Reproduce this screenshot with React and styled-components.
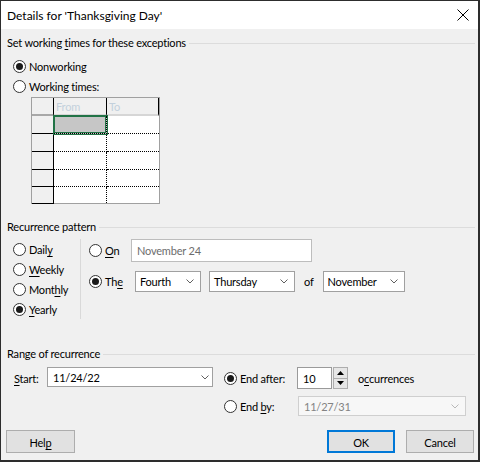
import React from 'react'
import styled, { createGlobalStyle } from 'styled-components'

const GlobalStyle = createGlobalStyle`
  html, body { margin: 0; padding: 0; background: #fff; }
  body {
    font-family: "Segoe UI", Lato, "Noto Sans", sans-serif;
    font-size: 11px;
    letter-spacing: -0.2px;
    color: #000;
  }
`

const Window = styled.div`
  width: 480px;
  height: 462px;
  box-sizing: border-box;
  border: 1px solid #2d2d2d;
  border-right-width: 2px;
  border-bottom-width: 2px;
  background: #f0f0f0;
  display: flex;
  flex-direction: column;
`

const TitleBar = styled.div`
  height: 28px;
  flex: none;
  background: #fff;
  display: flex;
  align-items: center;
  justify-content: space-between;
  padding: 0 9px 0 6px;
`

const Title = styled.div`
  font-size: 12px;
  letter-spacing: 0;
  line-height: 16px;
  padding-top: 1px;
`

const Body = styled.div`
  flex: 1;
  display: flex;
  flex-direction: column;
  padding: 0 3px 0 6px;
`

const GroupHead = styled.div`
  display: flex;
  align-items: center;
  gap: 3px;
  height: 16px;
  line-height: 16px;
  margin-top: ${p => p.$mt}px;
  &::after {
    content: "";
    flex: 1;
    border-top: 1px solid #dcdcdc;
  }
`

const Key = styled.u`
  text-decoration: underline;
  text-underline-offset: 2px;
  text-decoration-thickness: 1px;
`

const Option = styled.div`
  display: flex;
  align-items: center;
  gap: 3px;
  height: ${p => p.$h || 20}px;
  width: ${p => (p.$w ? p.$w + 'px' : 'auto')};
  padding-left: ${p => (p.$pl ?? 6)}px;
  margin-top: ${p => p.$mt || 0}px;
  flex: none;
  box-sizing: border-box;
`

const RadioDot = styled.span`
  width: 13px;
  height: 13px;
  box-sizing: border-box;
  border-radius: 50%;
  border: 1px solid #333;
  background: #fff;
  display: inline-flex;
  align-items: center;
  justify-content: center;
  flex: none;
  &::after {
    content: "";
    width: 7px;
    height: 7px;
    border-radius: 50%;
    background: #1a1a1a;
    display: ${p => (p.$on ? 'block' : 'none')};
  }
`

/* working times grid */
const Grid = styled.div`
  margin: 1px 0 0 24px;
  width: 129px;
  height: 107px;
  box-sizing: border-box;
  border: 1px solid #a0a0a0;
  background: #fff;
  display: grid;
  grid-template-columns: 22px 53px 52px;
  grid-template-rows: 18px 18px 18px 18px 17px 16px;
`

const Corner = styled.div`
  background: #f0f0f0;
  border-right: 1px solid #000;
  border-bottom: 2px solid #a8a8a8;
`

const ColHead = styled.div`
  background: #f0f0f0;
  border-right: 1px solid #000;
  border-bottom: 2px solid #d6d6d6;
  color: #c3d0dc;
  padding: 1px 0 0 2px;
  line-height: 16px;
`

const RowHead = styled.div`
  background: #f0f0f0;
  border-right: 1px solid #000;
  border-bottom: ${p => (p.$last ? 'none' : '1px solid #000')};
  box-shadow: ${p => (p.$last ? '0 1px 0 #000' : 'none')};
`

const DataCell = styled.div`
  position: relative;
  background: ${p => (p.$sel ? '#c6c6c6' : '#fff')};
  border-right: ${p => (p.$from ? '1px dotted #000' : 'none')};
  border-bottom: ${p => (p.$last ? 'none' : '1px dotted #000')};
  box-shadow: ${p => (p.$sel ? '0 0 0 1px #217346, inset 0 0 0 1px #217346' : 'none')};
  z-index: ${p => (p.$sel ? 1 : 0)};
`

/* recurrence pattern */
const Pattern = styled.div`
  display: flex;
  margin-top: 4px;
`

const Periods = styled.div`
  width: 74px;
  box-sizing: border-box;
  border-right: 1px solid #d9d9d9;
  display: flex;
  flex-direction: column;
`

const Rules = styled.div`
  padding-left: 8px;
  display: flex;
  flex-direction: column;
`

const RuleRow = styled.div`
  display: flex;
  align-items: center;
  margin-top: ${p => p.$mt || 0}px;
`

const TextBox = styled.div`
  width: ${p => p.$w}px;
  height: ${p => p.$h}px;
  box-sizing: border-box;
  background: #fff;
  border: 1px solid ${p => p.$border || '#a0a0a0'};
  color: ${p => p.$color || '#000'};
  padding-left: 5px;
  display: flex;
  align-items: center;
  flex: none;
`

const Select = styled.div`
  width: ${p => p.$w}px;
  height: ${p => p.$h || 21}px;
  box-sizing: border-box;
  background: ${p => (p.$disabled ? '#f7f7f7' : '#fff')};
  border: 1px solid ${p => (p.$disabled ? '#cfcfcf' : '#a0a0a0')};
  color: ${p => (p.$disabled ? '#838383' : '#000')};
  margin-left: ${p => p.$ml || 0}px;
  padding: 0 ${p => p.$pr ?? 5}px 0 ${p => p.$pl ?? 4}px;
  display: flex;
  align-items: center;
  justify-content: space-between;
  flex: none;
`

const OfLabel = styled.span`
  margin: 0 9px 0 9px;
`

/* range of recurrence */
const RangeGrid = styled.div`
  margin-top: 5px;
  display: grid;
  grid-template-columns: 40px 177px 73px auto;
  grid-template-rows: 22px 20px;
  row-gap: 7px;
  align-items: center;
`

const StartLabel = styled.div`
  padding-left: 7px;
  padding-top: 1px;
`

const SpinWrap = styled.div`
  display: flex;
  align-items: center;
`

const SpinButtons = styled.div`
  margin-left: 1px;
  width: 15px;
  height: 22px;
  display: flex;
  flex-direction: column;
`

const SpinBtn = styled.div`
  flex: 1;
  box-sizing: border-box;
  background: #e6e6e6;
  border: 1px solid #adadad;
  border-top-width: ${p => (p.$down ? 0 : 1)}px;
  display: flex;
  align-items: center;
  justify-content: center;
`

const Suffix = styled.span`
  margin-left: 10px;
`

/* buttons */
const ButtonRow = styled.div`
  margin: 14px 1px 0 -1px;
  display: flex;
  justify-content: space-between;
`

const ButtonGroup = styled.div`
  display: flex;
  gap: 11px;
`

const Button = styled.div`
  width: ${p => p.$w || 68}px;
  height: 23px;
  box-sizing: border-box;
  background: #e1e1e1;
  border: ${p => (p.$default ? '2px solid #0078d7' : '1px solid #adadad')};
  display: flex;
  align-items: center;
  justify-content: center;
  padding-top: 1px;
`

const Chevron = ({ color = '#606060' }) => (
  <svg width="8" height="5" viewBox="0 0 8 5">
    <polyline points="0.5,0.5 4,4 7.5,0.5" fill="none" stroke={color} strokeWidth="1" />
  </svg>
)

const CloseIcon = () => (
  <svg width="12" height="12" viewBox="0 0 12 12">
    <path d="M0.5 0.5 L11.5 11.5 M11.5 0.5 L0.5 11.5" stroke="#000" strokeWidth="1" />
  </svg>
)

const Tri = ({ down }) => (
  <svg width="7" height="4" viewBox="0 0 7 4">
    <polygon points={down ? '0,0 7,0 3.5,4' : '0,4 7,4 3.5,0'} fill="#000" />
  </svg>
)

function Radio({ on, children, ...rest }) {
  return (
    <Option {...rest}>
      <RadioDot $on={on} />
      <span>{children}</span>
    </Option>
  )
}

const rows = [0, 1, 2, 3, 4]

export default function App() {
  return (
    <>
      <GlobalStyle />
      <Window>
        <TitleBar>
          <Title>Details for 'Thanksgiving Day'</Title>
          <CloseIcon />
        </TitleBar>
        <Body>
          <GroupHead $mt={6}>
            <span>Set working <Key>t</Key>imes for these exceptions</span>
          </GroupHead>
          <Radio on $mt={5}>Nonworking</Radio>
          <Radio>Working times:</Radio>
          <Grid>
            <Corner />
            <ColHead>From</ColHead>
            <ColHead>To</ColHead>
            {rows.map(i => (
              <React.Fragment key={i}>
                <RowHead $last={i === 4} />
                <DataCell $from $sel={i === 0} $last={i === 4} />
                <DataCell $last={i === 4} />
              </React.Fragment>
            ))}
          </Grid>

          <GroupHead $mt={15}>
            <span>Recurrence pattern</span>
          </GroupHead>
          <Pattern>
            <Periods>
              <Radio>Dail<Key>y</Key></Radio>
              <Radio><Key>W</Key>eekly</Radio>
              <Radio>Mont<Key>h</Key>ly</Radio>
              <Radio on><Key>Y</Key>early</Radio>
            </Periods>
            <Rules>
              <RuleRow>
                <Radio $pl={0} $w={42} $h={23}><Key>O</Key>n</Radio>
                <TextBox $w={181} $h={23} $border="#bdbdbd" $color="#6d6d6d">November 24</TextBox>
              </RuleRow>
              <RuleRow $mt={9}>
                <Radio on $pl={0} $w={46} $h={21}>Th<Key>e</Key></Radio>
                <Select $w={66} $pr={6}>Fourth<Chevron /></Select>
                <Select $w={86} $ml={8} $pr={6}>Thursday<Chevron /></Select>
                <OfLabel>of</OfLabel>
                <Select $w={82} $pr={6}>November<Chevron /></Select>
              </RuleRow>
            </Rules>
          </Pattern>

          <GroupHead $mt={27}>
            <span>Range of recurrence</span>
          </GroupHead>
          <RangeGrid>
            <StartLabel><Key>S</Key>tart:</StartLabel>
            <Select $w={166} $h={20} $pl={5} $pr={3} style={{ alignSelf: 'start' }}>11/24/22<Chevron /></Select>
            <Radio on $pl={0}>End after:</Radio>
            <SpinWrap>
              <TextBox $w={35} $h={22} $border="#9a9a9a">10</TextBox>
              <SpinButtons>
                <SpinBtn><Tri /></SpinBtn>
                <SpinBtn $down><Tri down /></SpinBtn>
              </SpinButtons>
              <Suffix>o<Key>c</Key>currences</Suffix>
            </SpinWrap>
            <span />
            <span />
            <Radio $pl={0}>End <Key>b</Key>y:</Radio>
            <Select $w={168} $h={20} $ml={1} $pl={5} $pr={6} $disabled>
              11/27/31<Chevron color="#b8b8b8" />
            </Select>
          </RangeGrid>

          <ButtonRow>
            <Button $w={69}>Hel<Key>p</Key></Button>
            <ButtonGroup>
              <Button $default>OK</Button>
              <Button>Cancel</Button>
            </ButtonGroup>
          </ButtonRow>
        </Body>
      </Window>
    </>
  )
}
